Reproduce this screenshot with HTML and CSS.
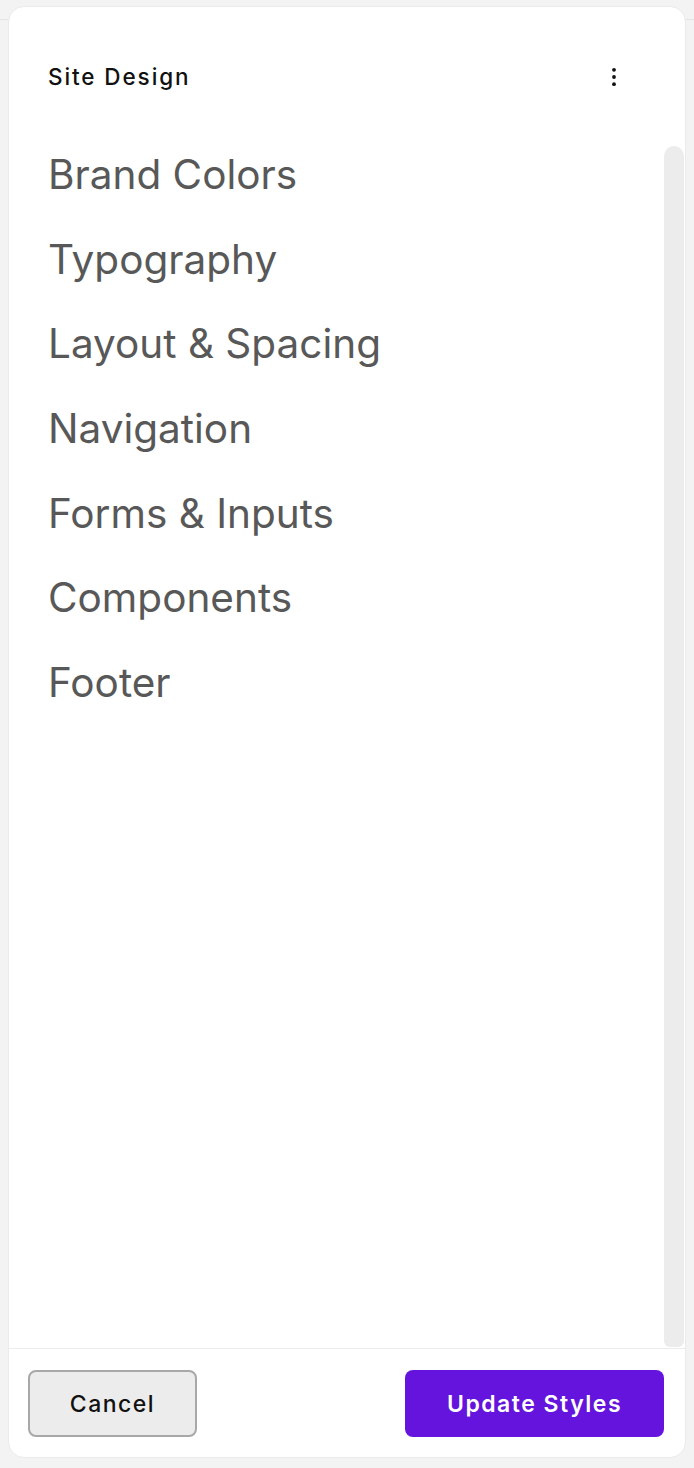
FILE: index.html
```html
<!DOCTYPE html>
<html lang="en">
<head>
<meta charset="utf-8">
<title>Site Design</title>
<link rel="stylesheet" href="styles.css">
</head>
<body>
<div class="backdrop-line"></div>
<section class="card">
  <header class="card-header">
    <h1 class="title">Site Design</h1>
    <button class="kebab" aria-label="More options">
      <svg width="24" height="24" viewBox="0 0 24 24"><circle cx="12" cy="4" r="2.1"/><circle cx="12" cy="12" r="2.1"/><circle cx="12" cy="20" r="2.1"/></svg>
    </button>
  </header>
  <div class="card-body">
    <ul class="menu">
      <li class="menu-item">Brand Colors</li>
      <li class="menu-item">Typography</li>
      <li class="menu-item">Layout &amp; Spacing</li>
      <li class="menu-item">Navigation</li>
      <li class="menu-item">Forms &amp; Inputs</li>
      <li class="menu-item">Components</li>
      <li class="menu-item">Footer</li>
    </ul>
    <div class="scroll-track"></div>
  </div>
  <footer class="card-footer">
    <button class="btn btn-cancel">Cancel</button>
    <button class="btn btn-primary">Update Styles</button>
  </footer>
</section>
</body>
</html>
```

FILE: styles.css
```css
html, body {
  margin: 0;
  padding: 0;
}
body {
  background: #f3f3f3;
  height: 1468px;
  padding: 6px 8px 0 8px;
  box-sizing: border-box;
  position: relative;
  font-family: Inter, "Noto Sans", sans-serif;
}
.backdrop-line {
  position: absolute;
  left: 0;
  right: 0;
  top: 19px;
  height: 1px;
  background: #e2e2e2;
}
.card {
  position: relative;
  width: 678px;
  height: 1452px;
  box-sizing: border-box;
  background: #fff;
  border-radius: 16px;
  border: 1px solid #ebebeb;
  display: flex;
  flex-direction: column;
  overflow: hidden;
}
.card-header {
  height: 125px;
  flex: none;
  display: flex;
  align-items: flex-start;
  justify-content: space-between;
  padding: 57px 59px 0 39px;
  box-sizing: border-box;
}
.title {
  margin: 0;
  margin-top: 1px;
  font-family: Inter, "Noto Sans", sans-serif;
  font-size: 22.5px;
  font-weight: 500;
  letter-spacing: 1.9px;
  line-height: 24px;
  color: #111;
}
.kebab {
  border: 0;
  background: none;
  padding: 0;
  width: 24px;
  height: 24px;
  margin-top: 1px;
  fill: #111;
  transform: scale(0.9);
}
.card-body {
  flex: 1;
  display: flex;
  min-height: 0;
}
.menu {
  flex: 1;
  list-style: none;
  margin: 0;
  padding: 1px 0 0 39px;
}
.menu-item {
  height: 84.67px;
  line-height: 84.67px;
  font-size: 40.5px;
  color: #585858;
  font-weight: 400;
}
.scroll-track {
  width: 20px;
  margin: 14px 1px 1px 0;
  background: #ececec;
  border-radius: 10px 10px 6px 6px;
}
.card-footer {
  flex: none;
  height: 109px;
  border-top: 1px solid #ececec;
  box-sizing: border-box;
  display: flex;
  justify-content: space-between;
  align-items: flex-start;
  padding: 21px 21px 0 19px;
}
.btn {
  height: 67px;
  border-radius: 8px;
  font-family: Inter, "Noto Sans", sans-serif;
  font-size: 23px;
  font-weight: 500;
  letter-spacing: 1.5px;
  cursor: pointer;
}
.btn-cancel {
  width: 169px;
  background: #ececec;
  border: 2px solid #a8a8a8;
  color: #111;
}
.btn-primary {
  width: 259px;
  background: #6414dc;
  border: 0;
  color: #fff;
  font-weight: 600;
}
```
